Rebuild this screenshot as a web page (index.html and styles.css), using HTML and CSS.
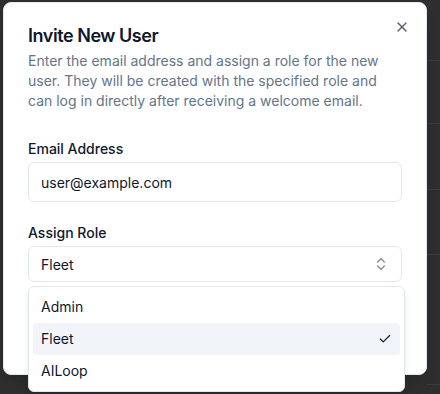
FILE: index.html
```html
<!DOCTYPE html>
<html lang="en">
<head>
    <meta charset="UTF-8">
    <meta name="viewport" content="width=device-width, initial-scale=1.0">
    <title>Invite New User</title>
    <link rel="stylesheet" href="styles.css">
</head>
<body>
    <!-- Страница под модальным окном -->
    <div class="page">
        <div class="page-row" style="height: 61px"></div>
        <div class="page-row" style="height: 63px"></div>
        <div class="page-row" style="height: 66px"></div>
        <div class="page-row" style="height: 65px"></div>
        <div class="page-row" style="height: 130px"></div>
    </div>

    <div class="dialog" role="dialog">
        <button class="dialog-close" aria-label="Close">
            <svg viewBox="0 0 24 24" width="16" height="16" fill="none" stroke="currentColor" stroke-width="2" stroke-linecap="round" stroke-linejoin="round">
                <path d="M18 6 6 18"/><path d="m6 6 12 12"/>
            </svg>
        </button>

        <div class="dialog-header">
            <h2 class="dialog-title">Invite New User</h2>
            <p class="dialog-desc">Enter the email address and assign a role for the new user. They will be created with the specified role and can log in directly after receiving a welcome email.</p>
        </div>

        <div class="form">
            <div class="field">
                <label class="label" for="email">Email Address</label>
                <input class="input" id="email" type="email" value="user@example.com">
            </div>

            <div class="field">
                <span class="label">Assign Role</span>
                <div class="select-wrap">
                    <button class="select-trigger">
                        <span>Fleet</span>
                        <svg class="chevrons" viewBox="0 0 24 24" width="16" height="16" fill="none" stroke="currentColor" stroke-width="2" stroke-linecap="round" stroke-linejoin="round">
                            <path d="m7 15 5 5 5-5"/><path d="m7 9 5-5 5 5"/>
                        </svg>
                    </button>

                    <!-- Открытый список ролей -->
                    <div class="select-menu">
                        <div class="select-item">Admin</div>
                        <div class="select-item selected">
                            Fleet
                            <span class="check">
                                <svg viewBox="0 0 24 24" width="16" height="16" fill="none" stroke="currentColor" stroke-width="2" stroke-linecap="round" stroke-linejoin="round">
                                    <path d="M20 6 9 17l-5-5"/>
                                </svg>
                            </span>
                        </div>
                        <div class="select-item">AILoop</div>
                    </div>
                </div>
            </div>
        </div>
    </div>
</body>
</html>
```

FILE: styles.css
```css
* {
    margin: 0;
    padding: 0;
    box-sizing: border-box;
}
html, body {
    height: 100%;
    overflow: hidden;
}
body {
    background: #2e2e2e;
    font-family: Inter, "Noto Sans", sans-serif;
    color: #0f172a;
    position: relative;
}
.page {
    padding-left: 427px;
}
.page-row {
    border-bottom: 1px solid #3b3b3b;
}
.dialog {
    position: absolute;
    top: 2px;
    left: 3px;
    width: 424px;
    height: 373px;
    background: #fff;
    border: 1px solid #e2e8f0;
    border-radius: 8px;
    padding: 24px;
    box-shadow: 0 10px 15px -3px rgba(0, 0, 0, 0.1), 0 4px 6px -4px rgba(0, 0, 0, 0.1);
}
.dialog-close {
    position: absolute;
    top: 16px;
    right: 16px;
    width: 16px;
    height: 16px;
    border: none;
    background: none;
    color: #0f172a;
    opacity: 0.7;
    display: flex;
    cursor: pointer;
}
.dialog-header {
    display: flex;
    flex-direction: column;
    gap: 6px;
}
.dialog-title {
    font-size: 18px;
    line-height: 18px;
    font-weight: 600;
    letter-spacing: -0.45px;
}
.dialog-desc {
    font-size: 14px;
    line-height: 20px;
    color: #64748b;
}
.form {
    display: flex;
    flex-direction: column;
    gap: 24px;
    padding-top: 31px;
}
.field {
    display: flex;
    flex-direction: column;
    gap: 6px;
}
.label {
    font-size: 14px;
    line-height: 14px;
    font-weight: 500;
}
.input {
    height: 40px;
    width: 100%;
    border: 1px solid #e2e8f0;
    border-radius: 6px;
    padding: 0 12px;
    font: inherit;
    font-size: 14px;
    color: #0f172a;
    outline: none;
}
.select-wrap {
    position: relative;
}
.select-trigger {
    height: 36px;
    width: 100%;
    border: 1px solid #e2e8f0;
    border-radius: 6px;
    background: #fff;
    padding: 0 12px;
    font: inherit;
    font-size: 14px;
    color: #0f172a;
    display: flex;
    align-items: center;
    justify-content: space-between;
}
.chevrons {
    opacity: 0.5;
}
.select-menu {
    position: absolute;
    top: calc(100% + 4px);
    left: 0;
    width: 377px;
    background: #fff;
    border: 1px solid #e2e8f0;
    border-radius: 6px;
    padding: 4px;
    box-shadow: 0 4px 6px -1px rgba(0, 0, 0, 0.1), 0 2px 4px -2px rgba(0, 0, 0, 0.1);
    z-index: 10;
}
.select-item {
    position: relative;
    font-size: 14px;
    line-height: 20px;
    padding: 6px 32px 6px 8px;
    border-radius: 3px;
    color: #0f172a;
}
.select-item.selected {
    background: #f1f5f9;
}
.check {
    position: absolute;
    right: 8px;
    top: 50%;
    transform: translateY(-50%);
    width: 14px;
    height: 14px;
    display: flex;
    align-items: center;
    justify-content: center;
}
```
